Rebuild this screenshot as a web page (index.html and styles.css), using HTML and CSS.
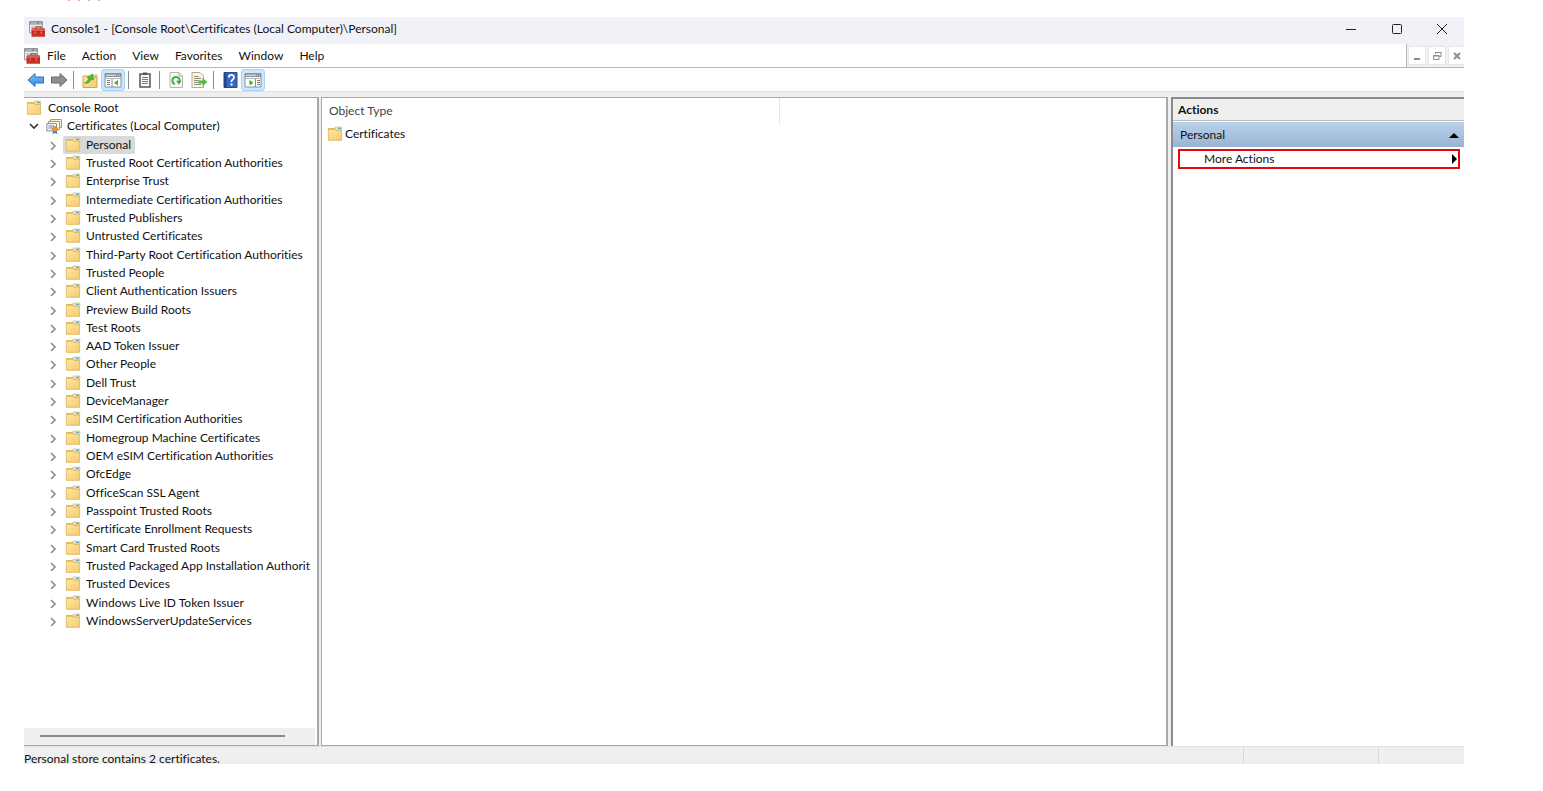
FILE: index.html
```html
<!DOCTYPE html>
<html lang="en">
<head>
<meta charset="utf-8">
<title>Console1</title>
<link rel="stylesheet" href="styles.css">
</head>
<body>
<svg width="0" height="0" class="defs" aria-hidden="true">
  <defs>
    <linearGradient id="gold" x1="0" y1="0" x2="1" y2="1"><stop offset="0" stop-color="#ffe7a0"/><stop offset="1" stop-color="#f3cc70"/></linearGradient>
    <linearGradient id="blue" x1="0" y1="0" x2="0" y2="1"><stop offset="0" stop-color="#7cc4fa"/><stop offset="1" stop-color="#2f86dc"/></linearGradient>
    <symbol id="folder" viewBox="0 0 16 16">
      <path d="M1 2H7.500L8.500 3H14.800V14.500H1Z" fill="#e0b95c"/>
      <path d="M8 1H14.800V4H8Z" fill="#f4e2b4" stroke="#d3b56a" stroke-width=".6"/>
      <path d="M11 1.700H14V3H11Z" fill="#58a8e6"/>
      <path d="M1.300 3.500H8L9 4.500H14.600V14.200H1.300Z" fill="url(#gold)" stroke="#dcb660" stroke-width=".6"/>
    </symbol>
    <symbol id="mmc" viewBox="0 0 16 16">
      <path d="M.5 .5H13.500V12H.5Z" fill="#eceef0" stroke="#9aa0a5"/>
      <path d="M.5 .5H13.500V3.500H.5Z" fill="#868d93"/>
      <path d="M1.500 2H8M10 2H12.500" stroke="#e5e8ea" stroke-width=".8"/>
      <path d="M2 6H6" stroke="#a5a9ad"/>
      <path d="M7 7.500V5.800H12V7.500" fill="none" stroke="#555" stroke-width="1.200"/>
      <path d="M2.500 8.500Q2.500 7.200 4 7.200H14.500Q16 7.200 16 8.500V15.800H2.500Z" fill="#cb3025"/>
      <path d="M3 8Q3 7.500 4 7.500H14.500Q15.500 7.500 15.500 8V10H3Z" fill="#e4584b"/>
      <path d="M2.500 10.800H16" stroke="#a3241b" stroke-width=".8"/>
      <path d="M5.500 10.500H6.800V12.500H5.500ZM11.700 10.500H13V12.500H11.700Z" fill="#e08a7e"/>
    </symbol>
    <symbol id="arrow" viewBox="0 0 18 16">
      <path d="M1 8L8 1.500V5H16.500V11H8V14.500Z" stroke-linejoin="round"/>
    </symbol>
    <symbol id="panel" viewBox="0 0 18 16">
      <path d="M1 1.500H17V15H1Z" fill="#fff" stroke="#8a8f94"/>
      <path d="M1 1.500H17V5H1Z" fill="#8a8f94"/>
      <path d="M2 3.200H12M13 3.200H14M15 3.200H16" stroke="#f4f4f4"/>
      <path d="M1 6.500H17" stroke="#b2b6ba"/>
    </symbol>
    <symbol id="chev" viewBox="0 0 10 10"><path d="M3 2L7 6L3 10" fill="none" stroke="#8c8c8c" stroke-width="1.600"/></symbol>
  </defs>
</svg>
<div class="remnant" aria-hidden="true"><i></i><i></i><i></i><i></i></div>
<main class="window">
  <header class="titlebar">
    <svg class="app-icon"><use href="#mmc"/></svg>
    <h1 class="title">Console1 - [Console Root\Certificates (Local Computer)\Personal]</h1>
    <div class="caption">
      <button type="button" aria-label="Minimize"><svg viewBox="0 0 12 12"><path d="M1 6.500H11" /></svg></button>
      <button type="button" aria-label="Maximize"><svg viewBox="0 0 12 12"><rect x="1.500" y="1.500" width="9" height="9" rx="1"/></svg></button>
      <button type="button" aria-label="Close"><svg viewBox="0 0 12 12"><path d="M1 1L11 11M11 1L1 11"/></svg></button>
    </div>
  </header>
  <div class="menubar">
    <svg class="doc-icon"><use href="#mmc"/></svg>
    <nav class="menus">
      <button type="button">File</button><button type="button">Action</button><button type="button">View</button><button type="button">Favorites</button><button type="button">Window</button><button type="button">Help</button>
    </nav>
    <div class="mdi">
      <button type="button" aria-label="Minimize child"><svg viewBox="0 0 10 10"><path d="M2 8H8" stroke-width="2"/></svg></button>
      <button type="button" aria-label="Restore child"><svg viewBox="0 0 10 10"><path d="M3.500 3V1.500H9V5.500H7.500M3 1.500H9.500M1.500 4.500H7V8.500H1.500ZM1 5H7.500"/></svg></button>
      <button type="button" aria-label="Close child"><svg viewBox="0 0 10 10"><path d="M2 2L8 8M8 2L2 8" stroke-width="2"/></svg></button>
    </div>
  </div>
  <div class="toolbar" role="toolbar" aria-label="Standard">
    <button type="button" class="tool" aria-label="Back"><svg viewBox="0 0 18 16"><use href="#arrow" fill="url(#blue)" stroke="#2c6fb8"/></svg></button>
    <button type="button" class="tool" aria-label="Forward"><svg viewBox="0 0 18 16"><g transform="translate(18 0) scale(-1 1)"><use href="#arrow" fill="#8e8e8e" stroke="#6b6b6b"/></g></svg></button>
    <span class="sep"></span>
    <button type="button" class="tool" aria-label="Up one level"><svg viewBox="0 0 18 16"><path d="M2 4H8L9 5H16V15.500H2Z" fill="url(#gold)" stroke="#cfa64d"/><path d="M11 3H16V5H11Z" fill="#f1d896" stroke="#cfa64d" stroke-width=".7"/><path d="M3.500 11C5.500 10.500 7 8.500 8 6.500L6 5.500L11.500 2L12.500 8L10.500 7.200C9 10 6.500 12 3.500 11Z" fill="#4cc03c" stroke="#2b9222" stroke-width=".6"/></svg></button>
    <button type="button" class="tool on" aria-label="Show or hide console tree" aria-pressed="true"><svg viewBox="0 0 18 16"><use href="#panel"/><path d="M8 7V15" stroke="#8a8f94"/><path d="M3 8.500H6M3 10.500H6M3 12.500H6" stroke="#777"/><path d="M14 8V13.500L10 10.700Z" fill="#33b429"/></svg></button>
    <span class="sep"></span>
    <button type="button" class="tool" aria-label="Properties"><svg viewBox="0 0 18 16"><path d="M4 2H14V15H4Z" fill="#fafafa" stroke="#555" stroke-width="1.500"/><path d="M7 .5H11V3H7Z" fill="#555"/><path d="M6 5.500H12M6 7.500H12M6 9.500H12M6 11.500H12" stroke="#777"/></svg></button>
    <span class="sep"></span>
    <button type="button" class="tool" aria-label="Refresh"><svg viewBox="0 0 18 16"><path d="M3 .5H12L15.500 4V15.500H3Z" fill="#f7f7f7" stroke="#b5b5b5"/><path d="M12 .5V4H15.500" fill="none" stroke="#b5b5b5"/><path d="M7.800 12A3.600 3.600 0 1 1 12.500 9.500" fill="none" stroke="#38ae3c" stroke-width="2"/><path d="M9 8.700H14.500L12 12.800Z" fill="#38ae3c"/></svg></button>
    <button type="button" class="tool" aria-label="Export list"><svg viewBox="0 0 18 16"><path d="M2 .5H10L13.500 4V15.500H2Z" fill="#fcf5d9" stroke="#b3ab91"/><path d="M4 4.500H9M4 6.500H11M4 8.500H9M4 10.500H9M4 12.500H11" stroke="#8f8b80"/><path d="M8.500 8.500H12.500V6L17.500 10L12.500 14V11.500H8.500Z" fill="#4cc03c"/></svg></button>
    <span class="sep"></span>
    <button type="button" class="tool" aria-label="Help"><svg viewBox="0 0 18 16"><path d="M3 .5H16V15.500H3Z" fill="#3668c4" stroke="#264c98"/><path d="M3 .5H5.500V15.500H3Z" fill="#21448c"/><path d="M7.800 5.500C7.800 2 13 2.200 13 5.200C13 7.500 10.400 7.300 10.400 10" fill="none" stroke="#fff" stroke-width="1.700"/><path d="M9.500 11.500H11.500V13.500H9.500Z" fill="#fff"/></svg></button>
    <button type="button" class="tool on" aria-label="Show or hide action pane" aria-pressed="true"><svg viewBox="0 0 18 16"><use href="#panel"/><path d="M11.500 7V15" stroke="#8a8f94"/><path d="M13 8.500H16M13 10.500H16M13 12.500H16" stroke="#777"/><path d="M5.500 8V13.500L9.500 10.700Z" fill="#33b429"/></svg></button>
  </div>
  <div class="panes">
    <section class="tree-pane" aria-label="Console tree">
      <ul class="tree" id="tree">
        <li class="root"><svg class="folder"><use href="#folder"/></svg><span>Console Root</span></li>
        <li class="snapin"><svg class="chev" viewBox="0 0 10 10"><path d="M1 3L5 7L9 3" fill="none" stroke="#333" stroke-width="1.600"/></svg><svg class="folder" viewBox="0 0 16 16"><path d="M4.500 1.500H15.500V9.500H4.500Z" fill="#f7efd2" stroke="#a99a6e"/><path d="M2.500 3.500H13.500V11.500H2.500Z" fill="#fff9e6" stroke="#a99a6e"/><path d="M.8 5.500H10.500V13H.8Z" fill="#eaf2fa" stroke="#7f97ad"/><path d="M2.500 8H8M2.500 10H6" stroke="#6b8db0"/><path d="M7.500 12L6.500 16L9 15L11.500 16L10.500 12Z" fill="#2d7ad0"/><circle cx="9" cy="11" r="2.600" fill="#f29a2e" stroke="#d0701a" stroke-width=".7"/></svg><span>Certificates (Local Computer)</span></li>
        <li class="store"><svg class="chev"><use href="#chev"/></svg><a href="#" class="selected"><svg class="folder"><use href="#folder"/></svg><span>Personal</span></a></li>
      </ul>
      <div class="hscroll"><div class="thumb"></div></div>
    </section>
    <section class="list-pane">
      <table class="list">
        <thead><tr><th scope="col">Object Type</th><td></td></tr></thead>
        <tbody><tr><td><div class="item"><svg class="folder"><use href="#folder"/></svg><span>Certificates</span></div></td><td></td></tr></tbody>
      </table>
    </section>
    <aside class="actions">
      <h2>Actions</h2>
      <button type="button" class="group"><span>Personal</span><svg viewBox="0 0 10 10"><path d="M0 8L5 3L10 8Z"/></svg></button>
      <button type="button" class="more"><span>More Actions</span><svg viewBox="0 0 10 10"><path d="M4 0L9 5L4 10Z"/></svg></button>
    </aside>
  </div>
  <footer class="status"><span class="message">Personal store contains 2 certificates.</span><span class="cell"></span><span class="cell last"></span></footer>
</main>
<script src="tree.js"></script>
</body>
</html>
```
FILE: styles.css
```css
* { box-sizing: border-box; }
body {
  margin: 0;
  min-height: 100vh;
  padding: 0 79px 27px 24px;
  background: #fff;
  color: #111;
  font: 12px/16px Lato, "Open Sans", sans-serif;
  font-variant-ligatures: none;
  display: flex;
  flex-direction: column;
}
.defs { position: absolute; }
button { font: inherit; font-variant-ligatures: none; color: inherit; background: none; border: 0; padding: 0; margin: 0; }
h1, h2 { margin: 0; font-size: 12px; font-weight: 400; }
ul { list-style: none; margin: 0; padding: 0; }
a { color: inherit; text-decoration: none; }

.remnant { height: 17px; padding-left: 44px; display: flex; gap: 8px; }
.remnant i { width: 2px; height: 1px; background: #f9a0ac; }

.window { flex: 1; display: flex; flex-direction: column; }

.titlebar { height: 27px; display: flex; align-items: center; background: #f1f2f8; padding: 0 0 3px 5px; }
.app-icon { width: 16px; height: 16px; }
.title { flex: 1; padding-left: 6px; white-space: nowrap; }
.caption { display: flex; }
.caption button { width: 46px; height: 24px; display: grid; place-items: center; }
.caption svg { width: 12px; height: 12px; fill: none; stroke: #222; }
.caption button:last-child { width: 44px; }

.menubar { height: 24px; display: flex; align-items: center; border-bottom: 1px solid #b4b7bb; }
.doc-icon { width: 16px; height: 16px; }
.menus { flex: 1; display: flex; gap: 16px; padding-left: 7px; }
.mdi { align-self: stretch; display: flex; align-items: center; gap: 2px; padding-left: 1px; border-left: 1px solid #b4b7bb; background: #f1f1f1; overflow: hidden; }
.mdi button { width: 18px; height: 19px; background: #fff; border: 1px solid #e6e6e6; display: grid; place-items: center; }
.mdi button:last-child { width: 16px; border-right: 0; }
.mdi svg { width: 10px; height: 10px; fill: none; stroke: #868d98; }

.toolbar { height: 24px; display: flex; align-items: flex-end; border-bottom: 1px solid #e0e0e0; }
.tool { width: 23px; height: 22px; display: grid; place-items: center; border: 1px solid transparent; border-radius: 3px; }
.tool svg { width: 18px; height: 16px; }
.tool.on { width: 24px; background: #cce8ff; border-color: #a5d3f8; }
.sep { width: 1px; height: 18px; margin: 0 4px 2px 3px; background: #8b8b8b; }

.panes { flex: 1; display: flex; background: #efefef; padding-top: 5px; }
.tree-pane { width: 295px; display: flex; flex-direction: column; background: #fff; border: solid #a5a8b0; border-width: 1px 2px 1px 0; }
.tree { min-height: 532px; display: grid; grid-auto-rows: 1fr; margin-right: 3px; padding: 1px 0 0 2px; overflow: hidden; }
.tree li, .tree a { display: flex; align-items: center; white-space: nowrap; }
.folder { flex: none; width: 16px; height: 16px; }
.chev { flex: none; width: 10px; height: 10px; }
.root { gap: 6px; }
.snapin { gap: 5px; padding-left: 3px; }
.snapin .chev { margin-right: 2px; }
.store { gap: 5px; padding-left: 22px; }
.tree a { gap: 5px; align-self: stretch; padding: 0 4px 0 2px; }
.selected { background: #d9d9d9; border-radius: 2px; }
.hscroll { margin: auto 2px 0 0; height: 17px; background: #efefef; padding: 7px 30px 7px 16px; }
.thumb { height: 2px; background: #8a8a8a; }

.list-pane { flex: 1; margin: 0 3px 0 2px; background: #fff; border: 1px solid #a5a8b0; border-right-width: 2px; }
.list { width: 100%; border-collapse: collapse; table-layout: fixed; }
.list th, .list td { text-align: left; font-weight: 400; padding: 0; }
.list th { width: 457px; height: 26px; padding-left: 7px; color: #444; border-right: 1px solid #e5e5e5; }
.item { display: flex; align-items: center; gap: 2px; height: 20px; padding-left: 5px; }

.actions { width: 293px; background: #fff; border: solid #8b8b8b; border-width: 2px 0 0 2px; display: flex; flex-direction: column; }
.actions h2 { height: 22px; padding: 3px 5px; font-weight: 700; background: #efefef; border-bottom: 1px solid #bdbdbd; }
.actions button { display: flex; align-items: center; justify-content: space-between; }
.actions svg { width: 10px; height: 10px; }
.group { height: 25px; margin-top: 1px; padding: 0 5px 0 7px; background: linear-gradient(#b9d1ea, #99b4d3); }
.more { height: 20px; margin: 2px 4px 0 5px; padding: 0 0 0 24px; }
.actions .more { border: 2px solid #e8060c; }

.status { height: 18px; display: flex; background: #efefef; border-top: 1px solid #e2e2e2; }
.message { flex: 1; padding-top: 5px; line-height: 14px; white-space: nowrap; }
.cell { width: 135px; border-left: 1px solid #d9d9d9; }
.last { width: 86px; }
```
FILE: tree.js
```js
const stores = [
  "Trusted Root Certification Authorities", "Enterprise Trust", "Intermediate Certification Authorities",
  "Trusted Publishers", "Untrusted Certificates", "Third-Party Root Certification Authorities",
  "Trusted People", "Client Authentication Issuers", "Preview Build Roots", "Test Roots",
  "AAD Token Issuer", "Other People", "Dell Trust", "DeviceManager", "eSIM Certification Authorities",
  "Homegroup Machine Certificates", "OEM eSIM Certification Authorities", "OfcEdge",
  "OfficeScan SSL Agent", "Passpoint Trusted Roots", "Certificate Enrollment Requests",
  "Smart Card Trusted Roots", "Trusted Packaged App Installation Authorit", "Trusted Devices",
  "Windows Live ID Token Issuer", "WindowsServerUpdateServices"
];
const tree = document.getElementById("tree");
const model = tree.querySelector(".store");
for (const name of stores) {
  const row = model.cloneNode(true);
  row.querySelector("a").classList.remove("selected");
  row.querySelector("span").textContent = name;
  tree.append(row);
}
```
